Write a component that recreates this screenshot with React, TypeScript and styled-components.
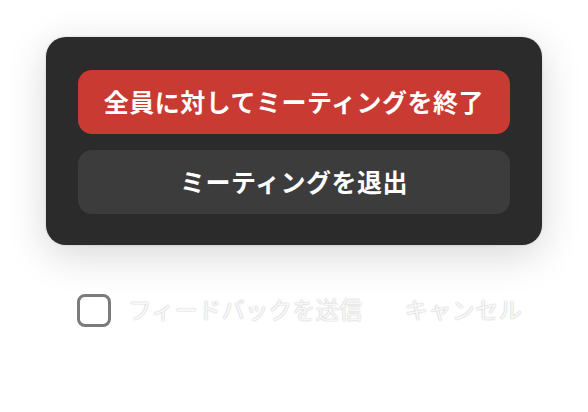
import React from "react";
import styled, { createGlobalStyle } from "styled-components";

const GlobalStyle = createGlobalStyle`
  html, body {
    margin: 0;
    padding: 0;
    background: #ffffff;
  }
  body {
    font-family: "Noto Sans CJK JP", "Noto Sans", sans-serif;
  }
`;

const PageStyled = styled.div`
  width: 588px;
  height: 412px;
  box-sizing: border-box;
  padding: 37px 0 0 46px;
  overflow: hidden;
`;

const PanelStyled = styled.div`
  width: 496px;
  height: 208px;
  box-sizing: border-box;
  padding: 33px 32px 31px;
  display: flex;
  flex-direction: column;
  gap: 16px;
  background: #2b2b2b;
  border-radius: 20px;
  box-shadow: 0 10px 40px rgba(0, 0, 0, 0.16), 0 0 2px rgba(0, 0, 0, 0.2);
`;

const ActionButton = styled.button<{ $danger?: boolean }>`
  height: 64px;
  border: none;
  border-radius: 14px;
  background: ${(p) => (p.$danger ? "#c93a33" : "#3c3c3c")};
  color: #ffffff;
  font-family: "Noto Sans CJK JP", sans-serif;
  font-weight: 700;
  font-size: 25px;
  letter-spacing: 0.5px;
  display: flex;
  align-items: center;
  justify-content: center;
  padding: 0 0 2px;
  cursor: pointer;
`;

const FooterStyled = styled.div`
  display: flex;
  align-items: center;
  margin-top: 49px;
  padding-left: 31px;
  height: 32px;
`;

const CheckBox = styled.span`
  width: 28px;
  height: 27px;
  border: 3px solid #7b7b7b;
  border-radius: 8px;
  margin-right: 17px;
  flex: none;
`;

const FadedText = styled.span<{ $gap?: number }>`
  font-size: 23.5px;
  font-weight: 400;
  color: #f8f8f8;
  text-shadow: 0 0 1.5px rgba(0, 0, 0, 0.32);
  margin-left: ${(p) => p.$gap ?? 0}px;
  line-height: 1;
  white-space: nowrap;
`;

function App() {
  return (
    <>
      <GlobalStyle />
      <PageStyled>
        <PanelStyled>
          <ActionButton $danger>全員に対してミーティングを終了</ActionButton>
          <ActionButton>ミーティングを退出</ActionButton>
        </PanelStyled>
        <FooterStyled>
          <CheckBox />
          <FadedText>フィードバックを送信</FadedText>
          <FadedText $gap={42}>キャンセル</FadedText>
        </FooterStyled>
      </PageStyled>
    </>
  );
}

export default App;
